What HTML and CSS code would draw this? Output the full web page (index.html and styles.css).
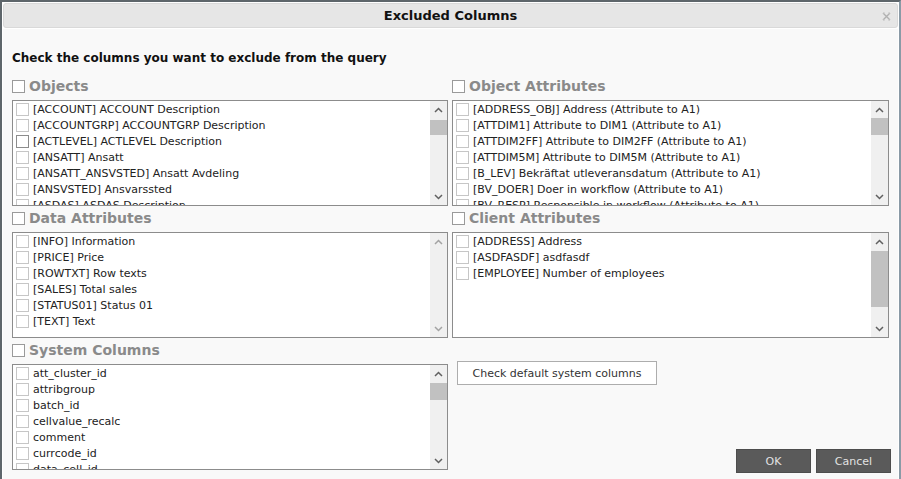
FILE: index.html
```html
<!DOCTYPE html>
<html lang="en">
<head>
<meta charset="UTF-8">
<title>Excluded Columns</title>
<link rel="stylesheet" href="styles.css">
</head>
<body>
  <div class="dialog">
    <div class="titlebar">
      <span class="title">Excluded Columns</span>
      <svg class="close" width="9" height="9" viewBox="0 0 9 9">
        <path d="M1 1 L8 8 M8 1 L1 8" stroke="#b0b0b0" stroke-width="1.4" fill="none"/>
        <path d="M1 1 H3 M6 1 H8 M1 8 H3 M6 8 H8" stroke="#c8c8c8" stroke-width="1" fill="none"/>
      </svg>
    </div>

    <div class="content">
      <div class="intro">Check the columns you want to exclude from the query</div>

      <div class="sections">
        <!-- Objects -->
        <div class="section">
          <div class="section-head"><span class="box head-box"></span>Objects</div>
          <div class="list">
            <div class="items">
              <div class="item"><span class="box"></span>[ACCOUNT] ACCOUNT Description</div>
              <div class="item"><span class="box"></span>[ACCOUNTGRP] ACCOUNTGRP Description</div>
              <div class="item"><span class="box hover"></span>[ACTLEVEL] ACTLEVEL Description</div>
              <div class="item"><span class="box"></span>[ANSATT] Ansatt</div>
              <div class="item"><span class="box"></span>[ANSATT_ANSVSTED] Ansatt Avdeling</div>
              <div class="item"><span class="box"></span>[ANSVSTED] Ansvarssted</div>
              <div class="item"><span class="box"></span>[ASDAS] ASDAS Description</div>
            </div>
            <div class="scrollbar">
              <div class="arrow"><svg width="9" height="6" viewBox="0 0 9 6"><path d="M1 5 L4.5 1.5 L8 5" stroke="#606060" stroke-width="1.5" fill="none"/></svg></div>
              <div class="track"><div class="thumb" style="height: 15px; margin-top: 2px;"></div></div>
              <div class="arrow"><svg width="9" height="6" viewBox="0 0 9 6"><path d="M1 1 L4.5 4.5 L8 1" stroke="#606060" stroke-width="1.5" fill="none"/></svg></div>
            </div>
          </div>
        </div>

        <!-- Object Attributes -->
        <div class="section">
          <div class="section-head"><span class="box head-box"></span>Object Attributes</div>
          <div class="list">
            <div class="items">
              <div class="item"><span class="box"></span>[ADDRESS_OBJ] Address (Attribute to A1)</div>
              <div class="item"><span class="box"></span>[ATTDIM1] Attribute to DIM1 (Attribute to A1)</div>
              <div class="item"><span class="box"></span>[ATTDIM2FF] Attribute to DIM2FF (Attribute to A1)</div>
              <div class="item"><span class="box"></span>[ATTDIM5M] Attribute to DIM5M (Attribute to A1)</div>
              <div class="item"><span class="box"></span>[B_LEV] Bekräftat utleveransdatum (Attribute to A1)</div>
              <div class="item"><span class="box"></span>[BV_DOER] Doer in workflow (Attribute to A1)</div>
              <div class="item"><span class="box"></span>[BV_RESP] Responsible in workflow (Attribute to A1)</div>
            </div>
            <div class="scrollbar">
              <div class="arrow"><svg width="9" height="6" viewBox="0 0 9 6"><path d="M1 5 L4.5 1.5 L8 5" stroke="#606060" stroke-width="1.5" fill="none"/></svg></div>
              <div class="track"><div class="thumb" style="height: 17px; margin-top: 0;"></div></div>
              <div class="arrow"><svg width="9" height="6" viewBox="0 0 9 6"><path d="M1 1 L4.5 4.5 L8 1" stroke="#606060" stroke-width="1.5" fill="none"/></svg></div>
            </div>
          </div>
        </div>

        <!-- Data Attributes -->
        <div class="section">
          <div class="section-head"><span class="box head-box"></span>Data Attributes</div>
          <div class="list">
            <div class="items">
              <div class="item"><span class="box"></span>[INFO] Information</div>
              <div class="item"><span class="box"></span>[PRICE] Price</div>
              <div class="item"><span class="box"></span>[ROWTXT] Row texts</div>
              <div class="item"><span class="box"></span>[SALES] Total sales</div>
              <div class="item"><span class="box"></span>[STATUS01] Status 01</div>
              <div class="item"><span class="box"></span>[TEXT] Text</div>
            </div>
            <div class="scrollbar">
              <div class="arrow"><svg width="9" height="6" viewBox="0 0 9 6"><path d="M1 5 L4.5 1.5 L8 5" stroke="#a3a3a3" stroke-width="1.5" fill="none"/></svg></div>
              <div class="track"></div>
              <div class="arrow"><svg width="9" height="6" viewBox="0 0 9 6"><path d="M1 1 L4.5 4.5 L8 1" stroke="#a3a3a3" stroke-width="1.5" fill="none"/></svg></div>
            </div>
          </div>
        </div>

        <!-- Client Attributes -->
        <div class="section">
          <div class="section-head"><span class="box head-box"></span>Client Attributes</div>
          <div class="list">
            <div class="items">
              <div class="item"><span class="box"></span>[ADDRESS] Address</div>
              <div class="item"><span class="box"></span>[ASDFASDF] asdfasdf</div>
              <div class="item"><span class="box"></span>[EMPLOYEE] Number of employees</div>
            </div>
            <div class="scrollbar">
              <div class="arrow"><svg width="9" height="6" viewBox="0 0 9 6"><path d="M1 5 L4.5 1.5 L8 5" stroke="#606060" stroke-width="1.5" fill="none"/></svg></div>
              <div class="track"><div class="thumb" style="height: 56px; margin-top: 1px;"></div></div>
              <div class="arrow"><svg width="9" height="6" viewBox="0 0 9 6"><path d="M1 1 L4.5 4.5 L8 1" stroke="#606060" stroke-width="1.5" fill="none"/></svg></div>
            </div>
          </div>
        </div>

        <!-- System Columns -->
        <div class="section">
          <div class="section-head"><span class="box head-box"></span>System Columns</div>
          <div class="list">
            <div class="items">
              <div class="item"><span class="box"></span>att_cluster_id</div>
              <div class="item"><span class="box"></span>attribgroup</div>
              <div class="item"><span class="box"></span>batch_id</div>
              <div class="item"><span class="box"></span>cellvalue_recalc</div>
              <div class="item"><span class="box"></span>comment</div>
              <div class="item"><span class="box"></span>currcode_id</div>
              <div class="item"><span class="box"></span>data_cell_id</div>
            </div>
            <div class="scrollbar">
              <div class="arrow"><svg width="9" height="6" viewBox="0 0 9 6"><path d="M1 5 L4.5 1.5 L8 5" stroke="#606060" stroke-width="1.5" fill="none"/></svg></div>
              <div class="track"><div class="thumb" style="height: 17px; margin-top: 1px;"></div></div>
              <div class="arrow"><svg width="9" height="6" viewBox="0 0 9 6"><path d="M1 1 L4.5 4.5 L8 1" stroke="#606060" stroke-width="1.5" fill="none"/></svg></div>
            </div>
          </div>
        </div>

        <div class="side">
          <button class="btn-light">Check default system columns</button>
          <div class="footer">
            <button class="btn-dark">OK</button>
            <button class="btn-dark">Cancel</button>
          </div>
        </div>
      </div>
    </div>
  </div>
</body>
</html>
```

FILE: styles.css
```css
/* Page and dialog frame */
html, body {
  overflow: hidden;
}

body {
  margin: 0;
  background-color: #7d8e9a;
  font-family: "DejaVu Sans", Verdana, sans-serif;
  font-size: 11px;
  color: #222;
}

.dialog {
  width: 895px;
  height: 500px;
  border: 2px solid #5e666b;
  border-right-color: #8a9aa6;
  padding: 1px;
  background-color: #fff;
  display: flex;
  flex-direction: column;
}

/* Title bar */
.titlebar {
  height: 23px;
  border: 1px solid #d9d9d9;
  border-radius: 3px;
  background-color: #e6e6e6;
  position: relative;
  display: flex;
  align-items: center;
  justify-content: center;
}

.title {
  font-weight: bold;
  font-size: 13px;
  color: #111;
}

.close {
  position: absolute;
  right: 6px;
  top: 8px;
}

/* Body */
.content {
  flex: 1;
  margin-top: 1px;
  background-color: #f9f9f9;
  padding: 21px 8px 0 9px;
}

.intro {
  font-weight: bold;
  font-size: 12px;
  line-height: 16px;
  height: 16px;
  color: #111;
  margin-bottom: 10px;
}

.sections {
  display: grid;
  grid-template-columns: 436px 437px;
  column-gap: 4px;
  row-gap: 2px;
}

.section-head {
  height: 20px;
  margin-bottom: 4px;
  display: flex;
  align-items: center;
  font-weight: bold;
  font-size: 14px;
  color: #8a8a8a;
}

.box {
  width: 11px;
  height: 11px;
  border: 1px solid #c6c6c6;
  background-color: #fff;
  flex-shrink: 0;
  margin-right: 4px;
}

.head-box {
  border-color: #9a9a9a;
  margin-right: 4px;
}

.box.hover {
  border-color: #8c8c8c;
}

/* List boxes */
.list {
  height: 106px;
  box-sizing: border-box;
  border: 1px solid #8c8c8c;
  background-color: #fff;
  display: flex;
}

.items {
  flex: 1;
  overflow: hidden;
}

.item {
  height: 16px;
  display: flex;
  align-items: center;
  padding-left: 3px;
  white-space: nowrap;
}

.scrollbar {
  width: 17px;
  background-color: #f0f0f0;
  display: flex;
  flex-direction: column;
}

.arrow {
  height: 17px;
  display: flex;
  align-items: center;
  justify-content: center;
}

.track {
  flex: 1;
}

.thumb {
  background-color: #c1c1c1;
}

/* Buttons column next to system columns */
.side {
  display: flex;
  flex-direction: column;
  justify-content: space-between;
  margin-bottom: -3px;
  margin-right: -2px;
}

.btn-light {
  margin-top: 21px;
  margin-left: 5px;
  width: 200px;
  height: 24px;
  border: 1px solid #adadad;
  background-color: #fff;
  font-family: "DejaVu Sans", Verdana, sans-serif;
  font-size: 11px;
  color: #333;
}

.footer {
  display: flex;
  justify-content: flex-end;
  gap: 5px;
}

.btn-dark {
  width: 75px;
  height: 24px;
  border: 1px solid #4d4d4d;
  background-color: #5a5a5a;
  font-family: "DejaVu Sans", Verdana, sans-serif;
  font-size: 11px;
  color: #e2e2e2;
}
```
